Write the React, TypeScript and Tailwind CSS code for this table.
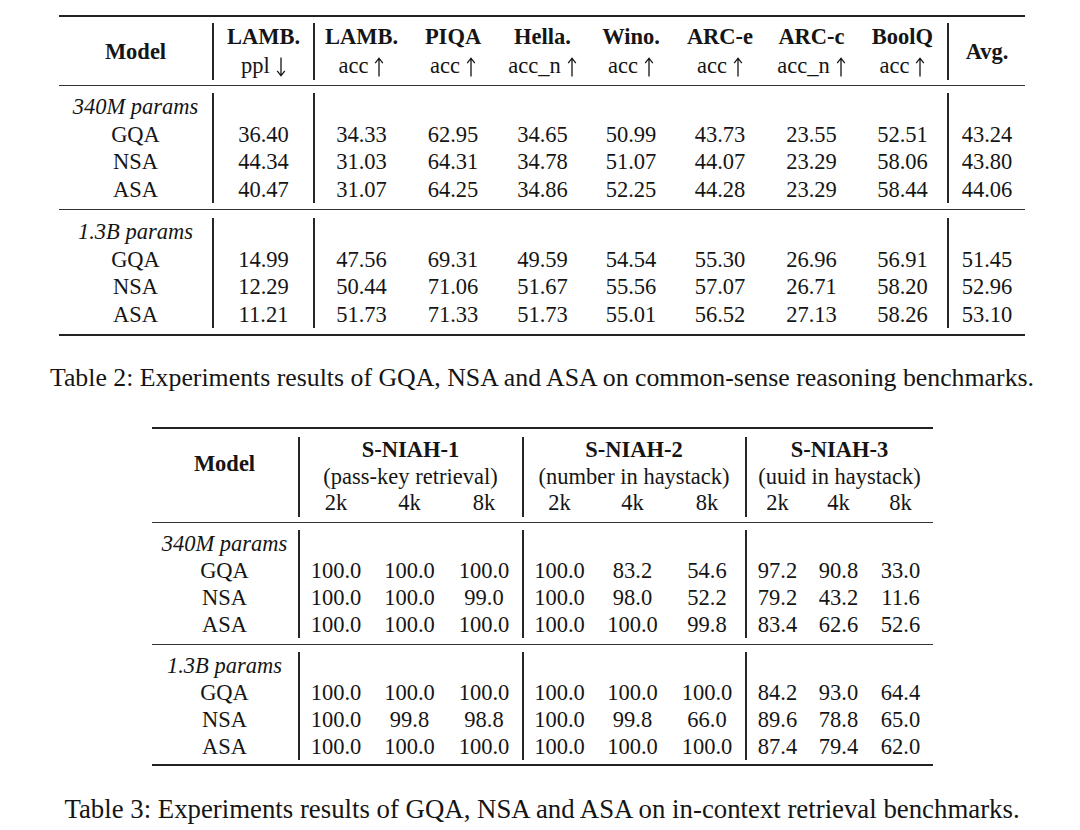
type Group = { label: string; rows: { name: string; vals: string[] }[] };

const table2: Group[] = [
  {
    label: "340M params",
    rows: [
      { name: "GQA", vals: ["36.40", "34.33", "62.95", "34.65", "50.99", "43.73", "23.55", "52.51", "43.24"] },
      { name: "NSA", vals: ["44.34", "31.03", "64.31", "34.78", "51.07", "44.07", "23.29", "58.06", "43.80"] },
      { name: "ASA", vals: ["40.47", "31.07", "64.25", "34.86", "52.25", "44.28", "23.29", "58.44", "44.06"] },
    ],
  },
  {
    label: "1.3B params",
    rows: [
      { name: "GQA", vals: ["14.99", "47.56", "69.31", "49.59", "54.54", "55.30", "26.96", "56.91", "51.45"] },
      { name: "NSA", vals: ["12.29", "50.44", "71.06", "51.67", "55.56", "57.07", "26.71", "58.20", "52.96"] },
      { name: "ASA", vals: ["11.21", "51.73", "71.33", "51.73", "55.01", "56.52", "27.13", "58.26", "53.10"] },
    ],
  },
];

const table3: Group[] = [
  {
    label: "340M params",
    rows: [
      { name: "GQA", vals: ["100.0", "100.0", "100.0", "100.0", "83.2", "54.6", "97.2", "90.8", "33.0"] },
      { name: "NSA", vals: ["100.0", "100.0", "99.0", "100.0", "98.0", "52.2", "79.2", "43.2", "11.6"] },
      { name: "ASA", vals: ["100.0", "100.0", "100.0", "100.0", "100.0", "99.8", "83.4", "62.6", "52.6"] },
    ],
  },
  {
    label: "1.3B params",
    rows: [
      { name: "GQA", vals: ["100.0", "100.0", "100.0", "100.0", "100.0", "100.0", "84.2", "93.0", "64.4"] },
      { name: "NSA", vals: ["100.0", "99.8", "98.8", "100.0", "99.8", "66.0", "89.6", "78.8", "65.0"] },
      { name: "ASA", vals: ["100.0", "100.0", "100.0", "100.0", "100.0", "100.0", "87.4", "79.4", "62.0"] },
    ],
  },
];

// [title, metric, arrow direction]
const t2Heads: [string, string, "up" | "down"][] = [
  ["LAMB.", "ppl", "down"],
  ["LAMB.", "acc", "up"],
  ["PIQA", "acc", "up"],
  ["Hella.", "acc_n", "up"],
  ["Wino.", "acc", "up"],
  ["ARC-e", "acc", "up"],
  ["ARC-c", "acc_n", "up"],
  ["BoolQ", "acc", "up"],
];

const vline = "border-l-2 border-[#262626]";

function Arrow({ dir }: { dir: "up" | "down" }) {
  return (
    <svg
      width="10"
      height="20"
      viewBox="0 0 10 20"
      className={`inline-block ml-[6px] align-[-4px] ${dir === "down" ? "rotate-180" : ""}`}
    >
      <path d="M5 19.5V1.5M1.2 6.2L5 1.2L8.8 6.2" stroke="#151515" strokeWidth="1.3" fill="none" />
    </svg>
  );
}

function GroupRows({
  group,
  cols,
  lines,
  rowH,
  pad,
}: {
  group: Group;
  cols: string;
  lines: number[];
  rowH: string;
  pad: string;
}) {
  const n = group.rows[0].vals.length;
  return (
    <div className={`${pad} ${cols}`}>
      <div className={`${rowH} text-center italic`}>{group.label}</div>
      {Array.from({ length: n }).map((_, i) => (
        <div key={i} className={`${rowH} ${lines.includes(i + 1) ? vline : ""}`} />
      ))}
      {group.rows.map((r) => (
        <>
          <div key={r.name} className={`${rowH} text-center`}>{r.name}</div>
          {r.vals.map((v, i) => (
            <div key={r.name + i} className={`${rowH} text-center ${lines.includes(i + 1) ? vline : ""}`}>
              {v}
            </div>
          ))}
        </>
      ))}
    </div>
  );
}

function Table2() {
  const cols = "grid grid-cols-[153px_101px_95px_90px_89px_88px_90px_93px_89px_78px]";
  const lines = [1, 2, 9];
  return (
    <div className="mx-auto w-[966px]">
      <div className="border-t-2 border-[#222]" />
      <div className={`pt-[6px] pb-[5px] ${cols} grid-rows-[28.5px_28.5px]`}>
        <div className="row-span-2 flex items-center justify-center font-bold">Model</div>
        {t2Heads.map((h, i) => (
          <div
            key={i}
            className={`row-span-2 flex flex-col items-center ${lines.includes(i + 1) ? vline : ""}`}
          >
            <div className="h-[28.5px] leading-[28.5px] font-bold">{h[0]}</div>
            <div className="h-[28.5px] leading-[28.5px]">
              {h[1]}
              <Arrow dir={h[2]} />
            </div>
          </div>
        ))}
        <div className={`row-span-2 flex items-center justify-center font-bold ${vline}`}>Avg.</div>
      </div>
      <div className="border-t border-[#333]" />
      <GroupRows group={table2[0]} cols={cols} lines={lines} rowH="h-[27.5px] leading-[27.5px]" pad="pt-[7px] pb-[6px]" />
      <div className="border-t border-[#333]" />
      <GroupRows group={table2[1]} cols={cols} lines={lines} rowH="h-[27.5px] leading-[27.5px]" pad="pt-[8px] pb-[6px]" />
      <div className="border-t-2 border-[#222]" />
    </div>
  );
}

const t3Heads = [
  ["S-NIAH-1", "(pass-key retrieval)"],
  ["S-NIAH-2", "(number in haystack)"],
  ["S-NIAH-3", "(uuid in haystack)"],
];

function Table3() {
  const cols = "grid grid-cols-[146px_75px_74px_75px_74px_74px_75px_64px_60px_64px]";
  const lines = [1, 4, 7];
  const rowH = "h-[26.67px] leading-[26.67px]";
  return (
    <div className="mx-auto w-[781px]">
      <div className="border-t-2 border-[#222]" />
      <div className={`pt-[8px] pb-[5px] ${cols}`}>
        <div className="row-span-2 flex items-center justify-center font-bold">Model</div>
        {t3Heads.map((h, i) => (
          <div key={i} className={`col-span-3 text-center ${rowH} font-bold ${vline}`}>
            {h[0]}
          </div>
        ))}
        {t3Heads.map((h, i) => (
          <div key={i} className={`col-span-3 text-center ${rowH} ${vline}`}>
            {h[1]}
          </div>
        ))}
        <div className={rowH} />
        {Array.from({ length: 9 }).map((_, i) => (
          <div key={i} className={`${rowH} text-center ${i % 3 === 0 ? vline : ""}`}>
            {["2k", "4k", "8k"][i % 3]}
          </div>
        ))}
      </div>
      <div className="border-t border-[#333]" />
      <GroupRows group={table3[0]} cols={cols} lines={lines} rowH="h-[27px] leading-[27px]" pad="pt-[7px] pb-[6px]" />
      <div className="border-t border-[#333]" />
      <GroupRows group={table3[1]} cols={cols} lines={lines} rowH="h-[27px] leading-[27px]" pad="pt-[7px] pb-[4px]" />
      <div className="border-t-2 border-[#222]" />
    </div>
  );
}

export default function App() {
  return (
    <div
      className="w-[1080px] h-[830px] bg-white pl-[4px] pt-[15px] text-[22.5px] text-[#151515] overflow-hidden"
      style={{ fontFamily: '"Liberation Serif", "DejaVu Serif", serif' }}
    >
      <Table2 />
      <p className="mt-[26px] text-center text-[25.8px] leading-[32px]">
        Table 2: Experiments results of GQA, NSA and ASA on common-sense reasoning benchmarks.
      </p>
      <div className="mt-[33px]">
        <Table3 />
      </div>
      <p className="mt-[27px] text-center text-[26.8px] leading-[32px]">
        Table 3: Experiments results of GQA, NSA and ASA on in-context retrieval benchmarks.
      </p>
    </div>
  );
}
